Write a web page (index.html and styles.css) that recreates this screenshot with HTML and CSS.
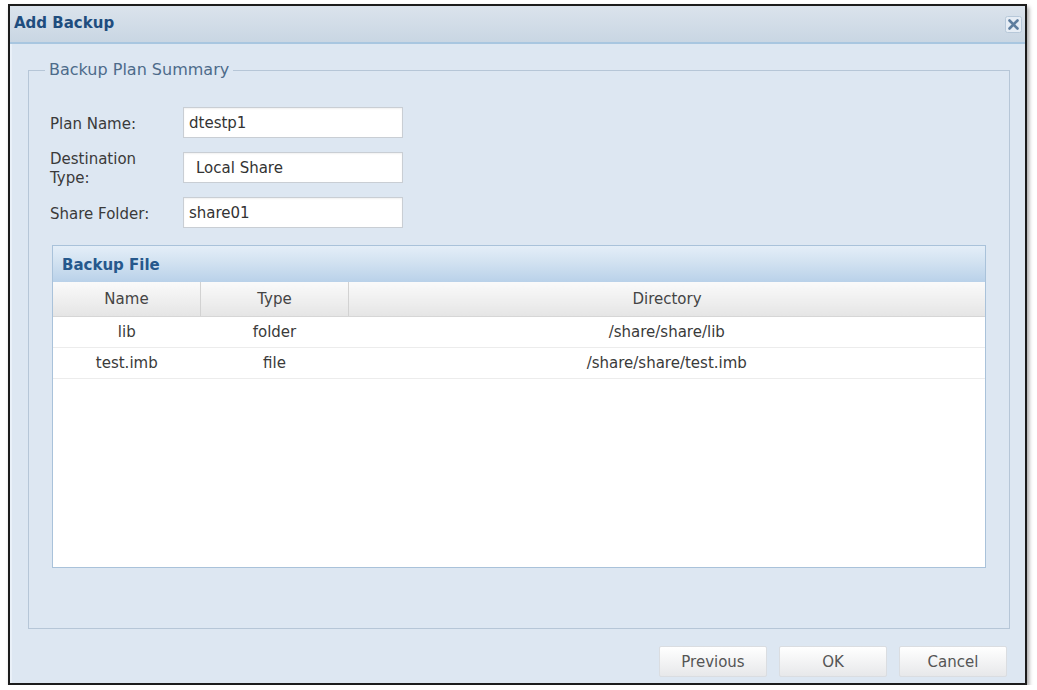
FILE: index.html
```html
<!DOCTYPE html>
<html lang="en">
  <head>
    <meta charset="UTF-8" />
    <title>Add Backup</title>
    <link rel="stylesheet" href="styles.css">
  </head>
  <body>
    <div class="dialog">
      <div class="titlebar">
        <span class="title">Add Backup</span>
        <button type="button" class="close-btn" title="Close">
          <svg width="17" height="17" viewBox="0 0 17 17">
            <rect x="0.5" y="0.5" width="16" height="16" rx="2" fill="#e6edf5" stroke="#b7c8d9" />
            <path d="M4.5 4.5 L12.5 12.5 M12.5 4.5 L4.5 12.5" stroke="#5d7d9e" stroke-width="2.6" stroke-linecap="round" />
          </svg>
        </button>
      </div>

      <div class="dialog-body">
        <fieldset class="summary">
          <legend>Backup Plan Summary</legend>

          <div class="field-row">
            <label>Plan Name:</label>
            <input type="text" value="dtestp1" readonly />
          </div>
          <div class="field-row">
            <label>Destination Type:</label>
            <input type="text" class="combo" value="Local Share" readonly />
          </div>
          <div class="field-row">
            <label>Share Folder:</label>
            <input type="text" value="share01" readonly />
          </div>

          <div class="panel">
            <div class="panel-header">Backup File</div>
            <div class="panel-body">
              <table class="grid">
                <thead>
                  <tr>
                    <th class="col-name">Name</th>
                    <th class="col-type">Type</th>
                    <th>Directory</th>
                  </tr>
                </thead>
                <tbody>
                  <tr>
                    <td>lib</td>
                    <td>folder</td>
                    <td>/share/share/lib</td>
                  </tr>
                  <tr>
                    <td>test.imb</td>
                    <td>file</td>
                    <td>/share/share/test.imb</td>
                  </tr>
                </tbody>
              </table>
            </div>
          </div>
        </fieldset>

        <div class="buttons">
          <button type="button">Previous</button>
          <button type="button">OK</button>
          <button type="button">Cancel</button>
        </div>
      </div>
    </div>
  </body>
</html>
```

FILE: styles.css
```css
body {
  margin: 0;
  padding: 0;
  background: #ffffff;
  font-family: "DejaVu Sans", "Liberation Sans", sans-serif;
  color: #333;
}
.dialog {
  width: 1015px;
  margin: 4px 0 0 8px;
  border: 2px solid #1c1c1c;
  background: #dde7f2;
  box-shadow: 2px 3px 4px rgba(0, 0, 0, 0.35);
}
.titlebar {
  display: flex;
  align-items: center;
  justify-content: space-between;
  height: 36px;
  padding: 0 3px 0 4px;
  background: linear-gradient(#dbe3ec, #c9d6e3);
  border-bottom: 2px solid #a8c6e0;
}
.title {
  font-size: 15px;
  font-weight: bold;
  color: #1f4d7e;
  padding-bottom: 2px;
}
.close-btn {
  border: none;
  background: none;
  padding: 0;
  width: 17px;
  height: 17px;
  cursor: pointer;
}
.dialog-body {
  padding: 17px 15px 6px 16px;
  border-left: 2px solid #e9f0f8;
}
.summary {
  margin: 0;
  padding: 28px 23px 60px 21px;
  border: 1px solid #b6c6d7;
}
.summary legend {
  font-size: 16px;
  line-height: 18px;
  color: #4d6b8a;
  padding: 0 4px;
  margin-left: -5px;
}
.field-row {
  display: flex;
  align-items: center;
  height: 31px;
  margin-bottom: 14px;
}
.field-row label {
  width: 120px;
  margin-right: 13px;
  padding-top: 3px;
  font-size: 15px;
  line-height: 19px;
  color: #3a3a3a;
}
.field-row input {
  width: 220px;
  height: 31px;
  box-sizing: border-box;
  border: 1px solid #c9ced4;
  box-shadow: inset 0 1px 2px rgba(0, 0, 0, 0.06);
  background: #fff;
  padding: 0 5px;
  font-family: inherit;
  font-size: 15px;
  color: #333;
  outline: none;
}
.field-row input.combo {
  padding-left: 12px;
}
.panel {
  margin: 17px 0 0 2px;
  border: 1px solid #a9c2da;
  background: #fff;
}
.panel-header {
  height: 36px;
  line-height: 38px;
  padding-left: 9px;
  font-size: 15px;
  font-weight: bold;
  color: #26588c;
  background: linear-gradient(#e4eef8 0%, #d2e2f1 45%, #b9d1e9 100%);
}
.panel-body {
  height: 285px;
  background: #fff;
}
.grid {
  width: 100%;
  border-collapse: collapse;
  font-size: 15px;
  color: #3a3a3a;
}
.grid th {
  height: 34px;
  padding: 0;
  font-weight: normal;
  color: #444;
  background: linear-gradient(#fafafa, #e5e5e5);
  border-left: 1px solid #d2d2d2;
  border-bottom: 1px solid #d6d6d6;
}
.grid th:first-child {
  border-left: none;
}
.grid .col-name {
  width: 147px;
}
.grid .col-type {
  width: 147px;
}
.grid td {
  height: 30px;
  padding: 0;
  text-align: center;
  border-bottom: 1px solid #ececec;
}
.buttons {
  display: flex;
  justify-content: flex-end;
  gap: 12px;
  margin-top: 17px;
  padding-right: 3px;
}
.buttons button {
  width: 108px;
  height: 31px;
  border: 1px solid #dadde1;
  border-radius: 2px;
  background: linear-gradient(#ffffff, #e7e8ea);
  font-family: inherit;
  font-size: 15px;
  color: #555;
  cursor: pointer;
}
.buttons button:hover {
  background: linear-gradient(#ffffff, #dcdfe3);
}
```
